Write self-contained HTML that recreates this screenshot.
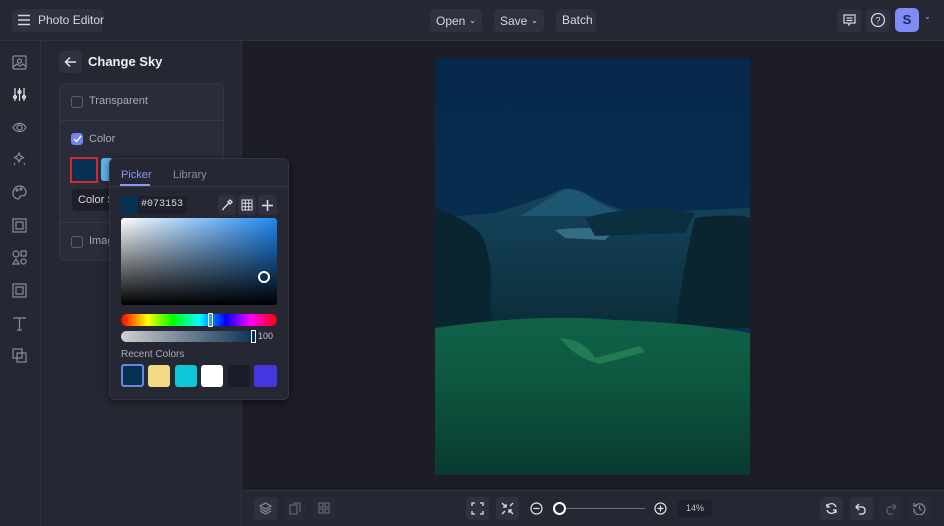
<!DOCTYPE html>
<html><head><style>
*{box-sizing:border-box;margin:0;padding:0}
body{width:944px;height:526px;overflow:hidden;background:#1c1d27;font-family:"Liberation Sans",sans-serif;color:#d8d9e0;position:relative}
.abs{position:absolute;white-space:nowrap}
.top{left:0;top:0;width:944px;height:41px;background:#252733;border-bottom:1px solid #30323f}
.btn{position:absolute;white-space:nowrap;background:#2f3140;border-radius:4px;font-size:12px;color:#d6d7de;line-height:23px;height:23px;padding:0 6px}
.side{left:0;top:41px;width:41px;height:485px;background:#252733;border-right:1px solid #30323f}
.panel{left:41px;top:41px;width:201px;height:485px;background:#252733;border-right:1px solid #30323f}
.bot{left:242px;top:490px;width:702px;height:36px;background:#252733;border-top:1px solid #30323f}
.ib{position:absolute;width:22px;height:22px;background:#2f3140;border-radius:4px}
.cb{position:absolute;width:12px;height:12px;border:1px solid #5b5e6e;border-radius:3px}
svg{position:absolute}
</style></head><body>
<div class="abs top"></div>
<div class="btn" style="left:12px;top:9px;width:91px;padding-left:26px">Photo Editor</div>
<svg style="left:17px;top:14px" width="14" height="12"><path d="M1 1.5h12M1 6h12M1 10.5h12" stroke="#d6d7de" stroke-width="1.4"/></svg>
<div class="btn" style="left:430px;top:9px;width:52px">Open <span style="font-size:9px;vertical-align:2px">&#8964;</span></div>
<div class="btn" style="left:494px;top:9px;width:50px">Save <span style="font-size:9px;vertical-align:2px">&#8964;</span></div>
<div class="btn" style="left:556px;top:9px;width:40px">Batch</div>
<div class="ib" style="left:837px;top:9px;width:24px;height:23px"></div>
<svg style="left:843px;top:14px" width="13" height="13"><path d="M1 1h11v8H7l-1 2-1-2H1z M3.5 4h6M3.5 6.5h6" stroke="#d6d7de" fill="none" stroke-width="1.2"/></svg>
<div class="ib" style="left:866px;top:9px;width:24px;height:23px"></div>
<svg style="left:870px;top:12px" width="16" height="16"><circle cx="8" cy="8" r="6.5" stroke="#d6d7de" fill="none" stroke-width="1.3"/><text x="8" y="11.5" font-size="9" fill="#d6d7de" text-anchor="middle" font-family="Liberation Sans">?</text></svg>
<div class="abs" style="left:895px;top:8px;width:24px;height:24px;background:#7f8cf5;border-radius:5px;color:#1d2260;font-weight:bold;font-size:13px;text-align:center;line-height:24px">S</div>
<div class="abs" style="left:924px;top:12px;font-size:8px;color:#aaa">&#8964;</div>

<div class="abs side"></div>
<svg style="left:12px;top:55px" width="16" height="310" fill="none" stroke="#8a8d9c" stroke-width="1.2">
<rect x="1" y="1" width="13" height="13" rx="1"/><circle cx="7.5" cy="6" r="2"/><path d="M1 12l4-3 3 2 3-2 3 3"/>
<g transform="translate(0,32)" stroke="#e0e1e8"><path d="M3 1v13M7.5 1v13M12 1v13"/><circle cx="3" cy="10" r="1.5"/><circle cx="7.5" cy="5" r="1.5"/><circle cx="12" cy="10" r="1.5"/></g>
<g transform="translate(0,65)"><path d="M1 7.5C4 2 11 2 14 7.5C11 13 4 13 1 7.5z"/><circle cx="7.5" cy="7.5" r="2.5"/></g>
<g transform="translate(0,97)"><path d="M7 1l1.5 3 3 1.5-3 1.5L7 10 5.5 7l-3-1.5 3-1.5z M2 11l1 2 M12 11l1 2"/></g>
<g transform="translate(0,130)"><path d="M8 1C3 1 1 5 1 8c0 4 3 6 5 6 2 0 1-3 3-3 3 0 5-1 5-4 0-3-3-6-6-6z"/><circle cx="5" cy="5" r="1"/><circle cx="9" cy="4" r="1"/></g>
<g transform="translate(0,163)"><rect x="1" y="1" width="13" height="13"/><rect x="4" y="4" width="7" height="7"/></g>
<g transform="translate(0,195)"><circle cx="4" cy="4" r="3"/><rect x="9" y="1" width="5" height="5"/><path d="M4 9l3 5H1z"/><circle cx="11.5" cy="11.5" r="2.5"/></g>
<g transform="translate(0,228)"><rect x="1" y="1" width="13" height="13"/><rect x="4" y="4" width="7" height="7"/></g>
<g transform="translate(0,261)"><path d="M1 2h13M7.5 2v12M5 14h5"/></g>
<g transform="translate(0,293)"><rect x="1" y="1" width="9" height="9"/><rect x="5" y="5" width="9" height="9"/></g>
</svg>

<div class="abs panel"></div>
<div class="ib" style="left:59px;top:51px;width:23px;height:22px"></div>
<svg style="left:64px;top:56px" width="13" height="12"><path d="M12 6H2M6 1.5L1.5 6 6 10.5" stroke="#e0e1e8" fill="none" stroke-width="1.5"/></svg>
<div class="abs" style="left:88px;top:54px;font-size:13px;font-weight:bold;color:#eceef3">Change Sky</div>
<div class="abs" style="left:59px;top:83px;width:165px;height:178px;background:#2a2c39;border:1px solid #33354a;border-radius:6px"></div>
<div class="abs" style="left:60px;top:120px;width:163px;height:1px;background:#363848"></div>
<div class="abs" style="left:60px;top:222px;width:163px;height:1px;background:#363848"></div>
<div class="cb" style="left:71px;top:96px"></div>
<div class="abs" style="left:89px;top:95px;font-size:11px;color:#a8aab6">Transparent</div>
<div class="cb" style="left:71px;top:133px;background:#7383f0;border-color:#7383f0"></div>
<svg style="left:73px;top:135px" width="9" height="8"><path d="M1 4l2.5 2.5L8 1" stroke="#fff" fill="none" stroke-width="1.4"/></svg>
<div class="abs" style="left:89px;top:133px;font-size:11px;color:#a8aab6">Color</div>
<div class="abs" style="left:70px;top:157px;width:28px;height:26px;background:#073153;border:2px solid #d8262c"></div>
<div class="abs" style="left:101px;top:158px;width:12px;height:23px;background:#5fb3e8;border-radius:3px"></div>
<div class="abs" style="left:72px;top:189px;width:50px;height:22px;background:#1f202b;border-radius:4px;font-size:11px;padding:5px 6px;color:#d6d7de">Color S</div>
<div class="cb" style="left:71px;top:236px"></div>
<div class="abs" style="left:89px;top:235px;font-size:11px;color:#a8aab6">Imag</div>

<div class="abs" style="left:109px;top:158px;width:180px;height:242px;background:#252733;border:1px solid #33354a;border-radius:6px;box-shadow:0 2px 8px rgba(0,0,0,.5)"></div>
<div class="abs" style="left:121px;top:169px;font-size:11px;color:#8d97f0">Picker</div>
<div class="abs" style="left:120px;top:184px;width:30px;height:2px;background:#8d97f0"></div>
<div class="abs" style="left:173px;top:169px;font-size:11px;color:#8a8d9c">Library</div>
<div class="abs" style="left:110px;top:186px;width:178px;height:1px;background:#363848"></div>
<div class="abs" style="left:121px;top:196px;width:66px;height:18px;background:#1f202b;border-radius:3px"></div>
<div class="abs" style="left:121px;top:196px;width:17px;height:18px;background:#073153"></div>
<div class="abs" style="left:141px;top:199px;font-size:10px;font-family:'Liberation Mono',monospace;color:#d6d7de">#073153</div>
<div class="ib" style="left:218px;top:195px;width:18px;height:20px"></div>
<svg style="left:221px;top:199px" width="12" height="12"><path d="M2 10l6-6M7 3l2-2 2 2-2 2z M1.5 11l1-1" stroke="#e0e1e8" fill="none" stroke-width="1.3"/></svg>
<div class="ib" style="left:238px;top:195px;width:18px;height:20px"></div>
<svg style="left:241px;top:199px" width="12" height="12"><path d="M1 1h10v10H1zM4.3 1v10M7.7 1v10M1 4.3h10M1 7.7h10" stroke="#e0e1e8" fill="none" stroke-width="1"/></svg>
<div class="ib" style="left:258px;top:195px;width:19px;height:20px"></div>
<svg style="left:261px;top:199px" width="13" height="13"><path d="M6.5 1v11M1 6.5h11" stroke="#e0e1e8" stroke-width="1.5"/></svg>
<div class="abs" style="left:121px;top:218px;width:156px;height:87px;border-radius:3px;background:linear-gradient(to bottom,rgba(0,0,0,0),#000),linear-gradient(to right,#fff,#1e88f0)"></div>
<div class="abs" style="left:258px;top:271px;width:12px;height:12px;border:2px solid #fff;border-radius:50%"></div>
<div class="abs" style="left:121px;top:314px;width:156px;height:12px;border-radius:6px;background:linear-gradient(to right,#f00,#ff0 17%,#0f0 33%,#0ff 50%,#00f 67%,#f0f 83%,#f00)"></div>
<div class="abs" style="left:208px;top:313px;width:5px;height:14px;border:1px solid #fff;background:#3aa0d8;border-radius:1px"></div>
<div class="abs" style="left:121px;top:331px;width:134px;height:11px;border-radius:6px;background:linear-gradient(to right,#d0d0d0,#0a3155)"></div>
<div class="abs" style="left:251px;top:330px;width:5px;height:13px;border:1px solid #fff;background:#0a3155"></div>
<div class="abs" style="left:258px;top:331px;font-size:9px;color:#c0c2cc">100</div>
<div class="abs" style="left:121px;top:349px;font-size:10px;color:#a8aab6">Recent Colors</div>
<div class="abs" style="left:121px;top:364px;width:23px;height:23px;background:#073153;border:2px solid #6a86e0;border-radius:3px"></div>
<div class="abs" style="left:148px;top:365px;width:22px;height:22px;background:#f3da86;border-radius:3px"></div>
<div class="abs" style="left:175px;top:365px;width:22px;height:22px;background:#0cc6d9;border-radius:3px"></div>
<div class="abs" style="left:201px;top:365px;width:22px;height:22px;background:#fff;border-radius:3px"></div>
<div class="abs" style="left:228px;top:365px;width:22px;height:22px;background:#1b1c2a;border-radius:3px"></div>
<div class="abs" style="left:254px;top:365px;width:23px;height:22px;background:#4437e0;border-radius:3px"></div>

<!-- image -->
<svg style="left:435px;top:58px" width="315" height="417">
<defs>
<linearGradient id="sky" x1="0" y1="0" x2="0" y2="1"><stop offset="0" stop-color="#06284a"/><stop offset="1" stop-color="#083455"/></linearGradient>
<linearGradient id="mid" x1="0" y1="0" x2="0" y2="1"><stop offset="0" stop-color="#15455e"/><stop offset="1" stop-color="#0c2d3a"/></linearGradient>
<linearGradient id="gr" x1="0" y1="0" x2="0" y2="1"><stop offset="0" stop-color="#0f6248"/><stop offset=".4" stop-color="#0d573f"/><stop offset="1" stop-color="#093a30"/></linearGradient>
</defs>
<rect width="315" height="417" fill="url(#sky)"/>
<path d="M60 155 Q110 140 125 132 Q135 128 150 135 Q175 150 200 155 L315 150 L315 270 L0 270 L0 160z" fill="url(#mid)"/>
<path d="M85 158 Q115 140 128 132 Q138 130 150 136 Q170 150 198 158z" fill="#1c5670"/>
<path d="M120 172 Q150 168 180 172 L170 182 L130 180z" fill="#4f8ea8" opacity=".6"/>
<path d="M0 150 Q30 160 45 175 Q60 200 55 250 L60 270 L0 270z" fill="#0a2530"/>
<path d="M260 160 Q300 155 315 160 L315 270 L240 270 Q250 200 260 160z" fill="#0a2530"/>
<path d="M150 160 Q200 145 260 155 L250 175 L160 178z" fill="#0c2f40"/>
<path d="M0 270 Q100 255 180 262 Q260 265 315 275 L315 417 L0 417z" fill="url(#gr)"/>
<path d="M125 280 Q150 282 160 300 L205 288 L210 294 L165 306 Q140 300 125 280z" fill="#2a8a5e" opacity=".7"/>
</svg>

<div class="abs bot"></div>
<div class="ib" style="left:254px;top:497px;width:23px;height:23px"></div>
<svg style="left:259px;top:502px" width="13" height="13" fill="none" stroke="#8a8d9c" stroke-width="1.1"><path d="M6.5 1L12 4 6.5 7 1 4z M1 6.5l5.5 3 5.5-3 M1 9l5.5 3 5.5-3"/></svg>
<div class="ib" style="left:284px;top:497px;width:22px;height:23px;background:#282a37"></div>
<svg style="left:289px;top:502px" width="12" height="13" fill="none" stroke="#6a6d7c" stroke-width="1.1"><rect x="1" y="3" width="7" height="9"/><path d="M4 1h7v9"/></svg>
<div class="ib" style="left:313px;top:497px;width:22px;height:23px;background:#282a37"></div>
<svg style="left:318px;top:502px" width="12" height="12" fill="none" stroke="#6a6d7c" stroke-width="1.1"><rect x="1" y="1" width="4" height="4"/><rect x="7" y="1" width="4" height="4"/><rect x="1" y="7" width="4" height="4"/><rect x="7" y="7" width="4" height="4"/></svg>
<div class="ib" style="left:466px;top:497px;width:23px;height:23px"></div>
<svg style="left:471px;top:502px" width="13" height="13" fill="none" stroke="#e0e1e8" stroke-width="1.3"><path d="M1 4V1h3M9 1h3v3M12 9v3H9M4 12H1V9"/></svg>
<div class="ib" style="left:496px;top:497px;width:23px;height:23px"></div>
<svg style="left:501px;top:502px" width="13" height="13" fill="none" stroke="#e0e1e8" stroke-width="1.3"><path d="M1 1l4 4M5 2v3H2M12 12L8 8M8 11V8h3M12 1L9 4M1 12l3-3"/></svg>
<svg style="left:530px;top:502px" width="13" height="13" fill="none" stroke="#e0e1e8" stroke-width="1.2"><circle cx="6.5" cy="6.5" r="5.5"/><path d="M3.5 6.5h6"/></svg>
<div class="abs" style="left:560px;top:508px;width:85px;height:1px;background:#6a6d7c"></div>
<div class="abs" style="left:553px;top:502px;width:13px;height:13px;border:2px solid #fff;border-radius:50%;background:#252733"></div>
<svg style="left:654px;top:502px" width="13" height="13" fill="none" stroke="#e0e1e8" stroke-width="1.2"><circle cx="6.5" cy="6.5" r="5.5"/><path d="M3.5 6.5h6M6.5 3.5v6"/></svg>
<div class="abs" style="left:678px;top:500px;width:34px;height:17px;background:#1f202b;border-radius:3px;font-size:9px;text-align:center;line-height:17px;color:#c0c2cc">14%</div>
<div class="ib" style="left:820px;top:497px;width:23px;height:23px"></div>
<svg style="left:825px;top:502px" width="13" height="13" fill="none" stroke="#e0e1e8" stroke-width="1.3"><path d="M11 5A4.7 4.7 0 0 0 2 5M2 8a4.7 4.7 0 0 0 9 0M2 2v3h3M11 11V8H8"/></svg>
<div class="ib" style="left:850px;top:497px;width:23px;height:23px"></div>
<svg style="left:855px;top:503px" width="13" height="12" fill="none" stroke="#e0e1e8" stroke-width="1.3"><path d="M4 1L1 4l3 3M1 4h7a4 4 0 0 1 0 7H4"/></svg>
<div class="ib" style="left:879px;top:497px;width:23px;height:23px;background:#282a37"></div>
<svg style="left:884px;top:503px" width="13" height="12" fill="none" stroke="#5a5d6c" stroke-width="1.3"><path d="M9 1l3 3-3 3M12 4H5a4 4 0 0 0 0 7h4"/></svg>
<div class="ib" style="left:908px;top:497px;width:23px;height:23px;background:#282a37"></div>
<svg style="left:913px;top:502px" width="13" height="13" fill="none" stroke="#8a8d9c" stroke-width="1.2"><path d="M2.5 3.5A5.5 5.5 0 1 1 1 6.5M1 1v3h3M6.5 3.5v3l2 2"/></svg>
</body></html>
